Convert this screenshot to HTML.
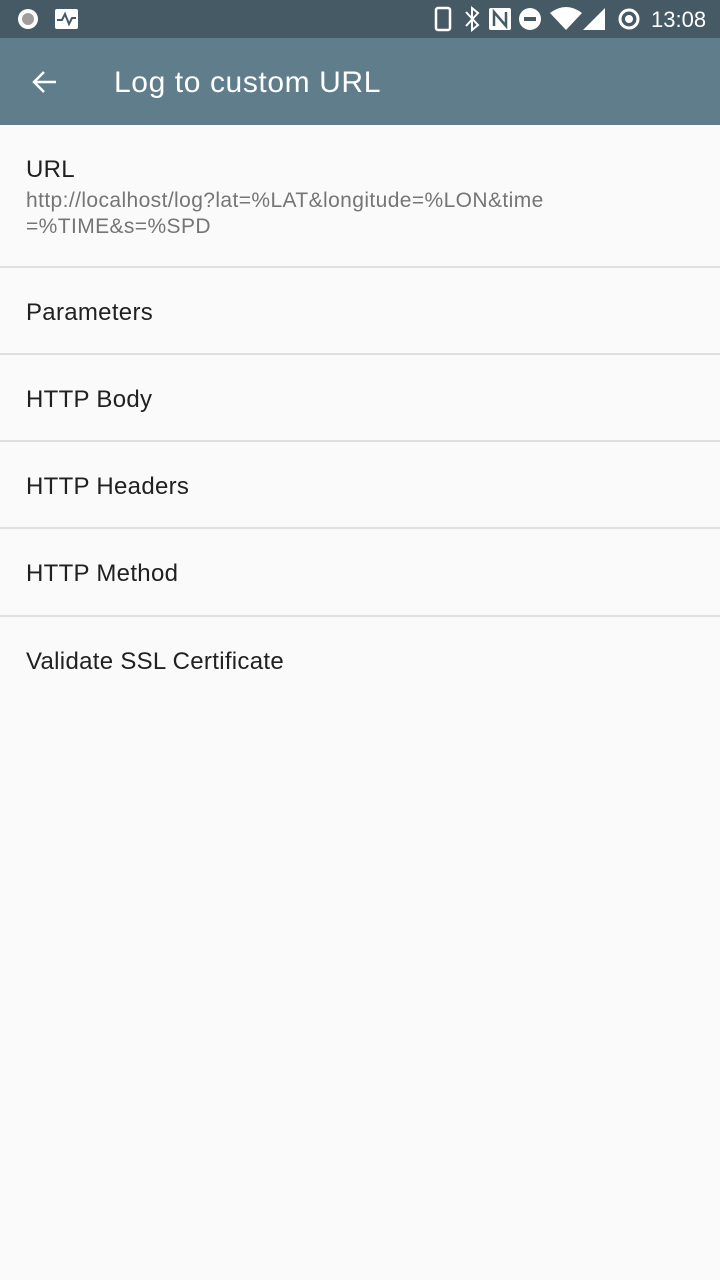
<!DOCTYPE html>
<html><head><style>
*{margin:0;padding:0;box-sizing:border-box}
body{width:720px;height:1280px;background:#fafafa;font-family:"Liberation Sans",sans-serif;position:relative;overflow:hidden}
.sb{position:absolute;top:0;left:0;width:720px;height:38px;background:#455a64;color:#fff}
.tb{position:absolute;top:38px;left:0;width:720px;height:87px;background:#607d8b;color:#fff}
.title{position:absolute;left:114px;top:28px;font-size:30px;letter-spacing:0.6px}
.item{position:absolute;left:0;width:720px;border-bottom:2px solid #e0e0e0}
.t{position:absolute;left:26px;font-size:24px;color:#212121;letter-spacing:0.3px}
.s{position:absolute;left:26px;font-size:21px;color:#757575;line-height:26px;letter-spacing:0.4px}
</style></head><body>
<div class="sb">
<svg width="720" height="38" style="position:absolute;left:0;top:0">
<circle cx="28" cy="19" r="10" fill="#fff"/><circle cx="28" cy="19" r="6" fill="#9e9e9e"/>
<rect x="55" y="9" width="23" height="20" rx="2" fill="#fff"/><path d="M57 20h5l3-6 4 10 3-6h4" stroke="#455a64" stroke-width="2" fill="none"/>
<rect x="436" y="8" width="14" height="22" rx="2" fill="none" stroke="#fff" stroke-width="2.5"/>
<path d="M466 12l12 13-6 5V8l6 5-12 13" stroke="#fff" stroke-width="2" fill="none"/>
<rect x="489" y="8" width="22" height="22" rx="2" fill="#fff"/><path d="M494 26V12l12 14V12" stroke="#455a64" stroke-width="2.5" fill="none"/>
<circle cx="530" cy="19" r="11" fill="#fff"/><rect x="524" y="17" width="12" height="4" fill="#455a64"/>
<path d="M550 13q16-12 32 0l-16 17z" fill="#fff"/>
<path d="M605 8v22h-22z" fill="#fff"/>
<circle cx="629" cy="19" r="9" fill="none" stroke="#fff" stroke-width="3"/><circle cx="629" cy="19" r="4" fill="#fff"/>
<text x="651" y="27" fill="#fff" font-size="22" font-family="Liberation Sans">13:08</text>
</svg></div>
<div class="tb">
<svg width="40" height="40" style="position:absolute;left:25px;top:24px"><path d="M31 20H9M19 10L9 20l10 10" stroke="#fff" stroke-width="2.5" fill="none"/></svg>
<div class="title">Log to custom URL</div>
</div>
<div class="item" style="top:125px;height:143px"><div class="t" style="top:31px">URL</div>
<div class="s" style="top:63px">http://localhost/log?lat=%LAT&amp;longitude=%LON&amp;time<br>=%TIME&amp;s=%SPD</div></div>
<div class="item" style="top:268px;height:87px"><div class="t" style="top:31px">Parameters</div></div>
<div class="item" style="top:355px;height:87px"><div class="t" style="top:31px">HTTP Body</div></div>
<div class="item" style="top:442px;height:87px"><div class="t" style="top:31px">HTTP Headers</div></div>
<div class="item" style="top:529px;height:88px"><div class="t" style="top:31px">HTTP Method</div></div>
<div class="t" style="top:648px">Validate SSL Certificate</div>
</body></html>
